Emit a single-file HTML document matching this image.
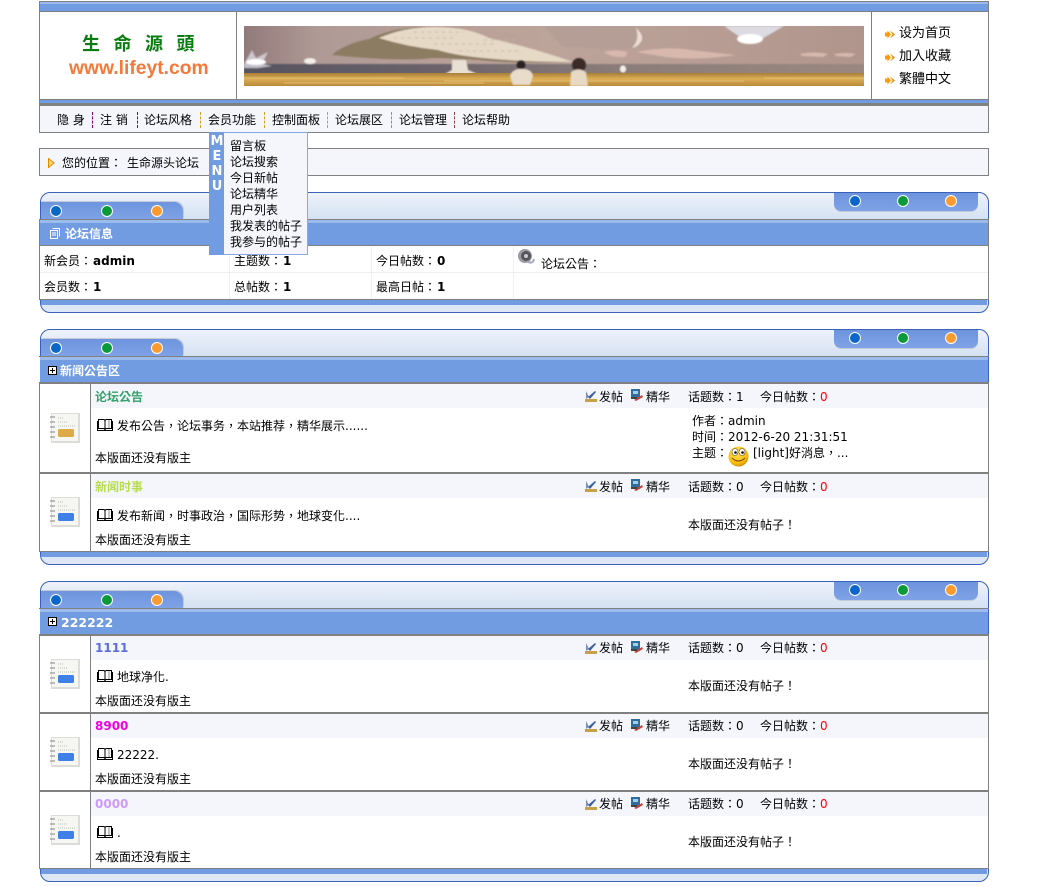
<!DOCTYPE html>
<html><head><meta charset="utf-8"><style>
html,body{margin:0;padding:0;background:#fff;width:1055px;height:887px;overflow:hidden}
body{position:relative;font:12px/16px "DejaVu Sans","Noto Sans CJK TC","WenQuanYi Zen Hei",sans-serif;color:#000}
div,span.a,svg.a{position:absolute}
.t{white-space:nowrap;height:16px;line-height:16px;padding-top:1px}
.g{background:#808080}
.bl{background:#719ce1}
.sec{left:40px;width:949px;box-sizing:border-box;border:1px solid #3b62b8;border-radius:10px;background:linear-gradient(#eef2fb,#d4e1f2) 0 0/100% 27px no-repeat #dde7f5}
.tl{left:0;top:9px;width:142px;height:17px;background:linear-gradient(#6d94de,#7fa2e6);border-radius:0 9px 0 0;box-shadow:1px -1px 0 #c4cad8}
.tr{left:793px;top:0;width:144px;height:18px;background:linear-gradient(#6d94de,#7fa2e6);border-radius:0 0 7px 7px;box-shadow:0 1px 0 #c4cad8}
.d{width:10px;height:10px;border-radius:50%;border:1px solid #fff}
.c1{background:#0a66c8}.c2{background:#0a9a3a}.c3{background:#fb9a2e}
.r{left:39px;width:950px;box-sizing:border-box;background:#fff;border-left:1px solid #808080;border-right:1px solid #808080}
.h{left:51px;right:0;top:0;height:24px;background:#f4f6fb}
.v{left:50px;top:0;bottom:0;width:1px;background:#808080}
.w{color:#fff;font-weight:bold}
b{font-weight:bold;margin-left:1px}
.s{color:#f00}
.l{width:1px;height:16px;top:112px;border-left:1px dashed}
</style></head><body>
<svg width="0" height="0" style="position:absolute"><defs>
<symbol id="nb" viewBox="0 0 30 30"><rect x="1" y="0" width="29" height="30" fill="#dcdcd8"/><rect x="2" y="1" width="26" height="27" fill="#f6f7f2"/><path d="M0 4h5M0 9h5M0 14h5M0 19h5M0 24h5" stroke="#999" stroke-width="1.2"/><path d="M8 5h6M8 9h10M8 13h17" stroke="#b9bdb5" stroke-dasharray="1 1"/><rect x="8" y="16" width="16" height="8" rx="1.5" fill="#3f80e8"/></symbol>
<symbol id="ny" viewBox="0 0 30 30"><rect x="1" y="0" width="29" height="30" fill="#dcdcd8"/><rect x="2" y="1" width="26" height="27" fill="#f6f7f2"/><path d="M0 4h5M0 9h5M0 14h5M0 19h5M0 24h5" stroke="#999" stroke-width="1.2"/><path d="M8 5h6M8 9h10M8 13h17" stroke="#b9bdb5" stroke-dasharray="1 1"/><rect x="8" y="16" width="16" height="8" rx="1.5" fill="#dcaa48"/></symbol>
<symbol id="bk" viewBox="0 0 16 13"><path d="M1.500 1.500h5.500l1 1 1-1h5.500v9h-5.500l-1 1-1-1h-5.500z" fill="#fff" stroke="#000"/><path d="M.5 3v9.500h15V3M8 2.500v9" fill="none" stroke="#000"/><path d="M12 2v8" stroke="#888"/></symbol>
<symbol id="p1" viewBox="0 0 12 12"><path d="M1 1v8l3-2z" fill="#7a8fb8"/><path d="M3 7l7-6 1 1-6 7z" fill="#3b5f9c"/><rect x="0" y="9" width="12" height="3" fill="#c9a04a"/></symbol>
<symbol id="p2" viewBox="0 0 12 12"><rect x="0" y="0" width="9" height="10" fill="#2f6d9e"/><rect x="2" y="2" width="5" height="3" fill="#9fd0e6"/><path d="M3 11l8-5 1 2-7 4z" fill="#c8443a"/><rect x="0" y="8" width="6" height="2" fill="#444"/></symbol>
<symbol id="ar" viewBox="0 0 10 9"><path d="M0 2.500h2.500V.5l3.500 4-3.500 4v-2H0z" fill="#ff9a00"/><path d="M5 .5L10 4.500 5 8.500l2.500-4z" fill="#f28a00"/></symbol>
<symbol id="plus" viewBox="0 0 9 9"><rect x=".5" y=".5" width="8" height="8" fill="#fff" stroke="#000"/><path d="M2 4.500h5M4.500 2v5" stroke="#000"/></symbol>
<radialGradient id="sm" cx=".4" cy=".3" r=".8"><stop offset="0" stop-color="#ffe95a"/><stop offset=".7" stop-color="#f8b808"/><stop offset="1" stop-color="#b87a08"/></radialGradient>
<linearGradient id="sky" x1="0" y1="0" x2="1" y2="0"><stop offset="0" stop-color="#917a7a"/><stop offset=".12" stop-color="#b09a96"/><stop offset=".5" stop-color="#bda49a"/><stop offset="1" stop-color="#b0958d"/></linearGradient>
<linearGradient id="hz" x1="0" y1="0" x2="1" y2="0"><stop offset="0" stop-color="#55535f"/><stop offset=".3" stop-color="#6a626a"/><stop offset=".6" stop-color="#8a7c78"/><stop offset="1" stop-color="#9a8880"/></linearGradient>
<linearGradient id="gr" x1="0" y1="0" x2="0" y2="1"><stop offset="0" stop-color="#a87e38"/><stop offset=".45" stop-color="#dcae55"/><stop offset="1" stop-color="#b98a3a"/></linearGradient>
<filter id="sf"><feGaussianBlur stdDeviation=".9"/></filter>
</defs></svg>

<!-- header -->
<div class="g" style="left:39px;top:1px;width:950px;height:132px"></div>
<div style="left:40px;top:2px;width:948px;height:130px;background:#fff"></div>
<div class="bl" style="left:40px;top:3px;width:948px;height:8px"></div>
<div style="left:40px;top:2px;width:948px;height:2px;background:#9bbbec"></div>
<div class="g" style="left:40px;top:11px;width:948px;height:1px"></div>
<div class="g" style="left:236px;top:12px;width:1px;height:87px"></div>
<div class="g" style="left:871px;top:12px;width:1px;height:87px"></div>
<div class="bl" style="left:40px;top:99px;width:948px;height:5px;border-top:1px solid #808080;box-sizing:border-box"></div>
<div class="g" style="left:40px;top:103px;width:948px;height:3px"></div>
<div style="left:40px;top:106px;width:948px;height:26px;background:#f4f6fb"></div>

<div class="t" style="left:82px;top:33px;height:24px;line-height:24px;padding:0;font-size:18px;font-weight:bold;color:#0a7d10;letter-spacing:13.500px">生命源頭</div>
<div class="t" style="left:69px;top:58px;height:22px;padding:0;font:bold 19.300px/22px 'Liberation Sans',sans-serif;color:#f5793a">www.lifeyt.com</div>

<svg class="a" style="left:244px;top:26px" width="620" height="60" viewBox="0 0 620 60">
<rect width="620" height="60" fill="url(#sky)"/>
<g filter="url(#sf)">
<path d="M390 0q14 8 10 16-4 6-12 6-30 2-70-2L300 0z" fill="#b59e96"/>
<path d="M392 2q10 9 4 15-3 4-8 5 8-8 4-20z" fill="#ecdcd2"/>
<path d="M360 26q12-3 24 0l-3 5q-14 1-21-5zM392 26q30-6 55-2l45 5q-40 6-70 2zM556 28q14-3 28 0l-5 3-21-1zM590 28q12-2 22 0l-6 3-14-1z" fill="#d8b8ac"/>
<rect y="38" width="620" height="10" fill="url(#hz)"/>
<path d="M88 29Q100 18 125 13q20-10 50-12 30 0 50 9 50 10 100 26-50 2-90-2-30-2-47-2-30 4-100-3z" fill="#8c7c62"/>
<path d="M135 12q25-11 55-11 35 0 55 11 45 10 84 24-50 0-90-4-30-3-45-8-30-3-59-12z" fill="#e6d9c6"/>
<path d="M150 12h60M170 6h50M190 18h60M215 25h60M240 14h30" stroke="#c8b8a2" stroke-dasharray="3 4"/>
<path d="M208 34l14 0 2 10 16 7h-44l12-7z" fill="#e8e0d2"/>
<path d="M0 38l8-14 4 8 12-6-6 12 10 2-14 2-14 0z" fill="#d5d2dc" opacity=".85"/><ellipse cx="12" cy="36" rx="10" ry="3" fill="#fff"/>
<ellipse cx="66" cy="35" rx="6" ry="3" fill="#f4efe9"/>
<path d="M480 0l20 14 16 0 24-14z" fill="#e4e6f0" opacity=".85"/><ellipse cx="506" cy="13" rx="13" ry="5" fill="#fff"/>
<ellipse cx="379" cy="43" rx="3" ry="3.500" fill="#f2efe8"/>
</g>
<rect y="47" width="620" height="13" fill="url(#gr)"/>
<path d="M0 52h160M200 55h300M520 52h100M40 57h200" stroke="#ecca84" opacity=".7"/>
<g filter="url(#sf)"><circle cx="277" cy="39" r="4.500" fill="#2c2220"/><path d="M266 50q2-6 8-7h7q7 1 8 7l-3 9h-17z" fill="#e9dccb"/>
<ellipse cx="335" cy="39" rx="7" ry="7" fill="#3a2a28"/><path d="M326 60l1-14q7-5 15 0l2 14z" fill="#e8d9c4"/></g>
</svg>

<svg class="a" style="left:885px;top:30px" width="10" height="9"><use href="#ar"/></svg>
<svg class="a" style="left:885px;top:53px" width="10" height="9"><use href="#ar"/></svg>
<svg class="a" style="left:885px;top:76px" width="10" height="9"><use href="#ar"/></svg>
<div class="t" style="left:899px;top:25px;font-size:13px">设为首页</div>
<div class="t" style="left:899px;top:48px;font-size:13px">加入收藏</div>
<div class="t" style="left:899px;top:71px;font-size:13px">繁體中文</div>

<!-- nav -->
<div class="t" style="left:57px;top:111px">隐 身</div>
<div class="l" style="left:92px;color:#800080"></div>
<div class="t" style="left:100px;top:111px">注 销</div>
<div class="l" style="left:137px;color:#800080"></div>
<div class="t" style="left:144px;top:111px">论坛风格</div>
<div class="l" style="left:200px;color:#c9a030"></div>
<div class="t" style="left:208px;top:111px">会员功能</div>
<div class="l" style="left:264px;color:#c9a030"></div>
<div class="t" style="left:272px;top:111px">控制面板</div>
<div class="l" style="left:327px;color:#c9a030"></div>
<div class="t" style="left:335px;top:111px">论坛展区</div>
<div class="l" style="left:391px;color:#c08040"></div>
<div class="t" style="left:399px;top:111px">论坛管理</div>
<div class="l" style="left:454px;color:#a04040"></div>
<div class="t" style="left:462px;top:111px">论坛帮助</div>

<!-- location -->
<div style="left:39px;top:148px;width:950px;height:28px;box-sizing:border-box;border:1px solid #808080;background:#f4f6fb"></div>
<svg class="a" style="left:48px;top:158px" width="7" height="10"><path d="M.5.500L6 5 .5 9.500z" fill="#ffd878" stroke="#e08a00"/></svg>
<div class="t" style="left:62px;top:154px">您的位置：</div>
<div class="t" style="left:127px;top:154px">生命源头论坛</div>

<!-- section 1 -->
<div class="sec" style="top:192px;height:121px"><div class="tl"></div><div class="tr"></div>
<div class="d c1" style="left:9px;top:12px"></div><div class="d c2" style="left:60px;top:12px"></div><div class="d c3" style="left:110px;top:12px"></div>
<div class="d c1" style="left:808px;top:2px"></div><div class="d c2" style="left:856px;top:2px"></div><div class="d c3" style="left:904px;top:2px"></div></div>
<div class="g" style="left:39px;top:219px;width:950px;height:81px"></div>
<div style="left:40px;top:220px;width:948px;height:3px;background:#9bbbec"></div>
<div class="bl" style="left:40px;top:223px;width:948px;height:22px"></div>
<div style="left:40px;top:246px;width:948px;height:53px;background:#fff"></div>
<div style="left:40px;top:272px;width:948px;height:1px;background:#f0f0f0"></div>
<div style="left:229px;top:246px;width:1px;height:53px;background:#f0f0f0"></div>
<div style="left:371px;top:246px;width:1px;height:53px;background:#f0f0f0"></div>
<div style="left:513px;top:246px;width:1px;height:53px;background:#f0f0f0"></div>
<div class="bl" style="left:41px;top:300px;width:946px;height:5px"></div>
<svg class="a" style="left:50px;top:228px" width="10" height="11"><path d="M2.500.500h7v8M.5 2.500h7v8h-7zM2 5h4M2 7h4" fill="none" stroke="#fff"/></svg>
<div class="t w" style="left:65px;top:225px">论坛信息</div>
<div class="t" style="left:44px;top:252px">新会员：<b>admin</b></div>
<div class="t" style="left:44px;top:278px">会员数：<b>1</b></div>
<div class="t" style="left:234px;top:252px">主题数：<b>1</b></div>
<div class="t" style="left:234px;top:278px">总帖数：<b>1</b></div>
<div class="t" style="left:376px;top:252px">今日帖数：<b>0</b></div>
<div class="t" style="left:376px;top:278px">最高日帖：<b>1</b></div>
<svg class="a" style="left:517px;top:248px" width="19" height="19"><path d="M11 14q5 2 6-3" fill="none" stroke="#a8a8c8" stroke-width="2"/><circle cx="8" cy="8" r="7" fill="#9a9aa0"/><circle cx="9" cy="8" r="5" fill="#55555c"/><circle cx="9" cy="8" r="2" fill="#c8c8d0"/></svg>
<div class="t" style="left:541px;top:255px">论坛公告：</div>

<!-- menu -->
<div style="left:209px;top:132px;width:99px;height:123px;box-sizing:border-box;border:1px solid #88a8e0;background:#f4f6fb"></div>
<div class="bl" style="left:209px;top:132px;width:15px;height:123px"></div>
<div class="t w" style="left:209px;top:133px;width:16px;text-align:center;font-size:13px">M</div>
<div class="t w" style="left:209px;top:148px;width:16px;text-align:center;font-size:13px">E</div>
<div class="t w" style="left:209px;top:163px;width:16px;text-align:center;font-size:13px">N</div>
<div class="t w" style="left:209px;top:178px;width:16px;text-align:center;font-size:13px">U</div>
<div class="t" style="left:230px;top:137px">留言板</div>
<div class="t" style="left:230px;top:153px">论坛搜索</div>
<div class="t" style="left:230px;top:169px">今日新帖</div>
<div class="t" style="left:230px;top:185px">论坛精华</div>
<div class="t" style="left:230px;top:201px">用户列表</div>
<div class="t" style="left:230px;top:217px">我发表的帖子</div>
<div class="t" style="left:230px;top:233px">我参与的帖子</div>

<!-- section 2 -->
<div class="sec" style="top:329px;height:236px"><div class="tl"></div><div class="tr"></div>
<div class="d c1" style="left:9px;top:12px"></div><div class="d c2" style="left:60px;top:12px"></div><div class="d c3" style="left:110px;top:12px"></div>
<div class="d c1" style="left:808px;top:2px"></div><div class="d c2" style="left:856px;top:2px"></div><div class="d c3" style="left:904px;top:2px"></div></div>
<div class="g" style="left:39px;top:356px;width:950px;height:1px"></div>
<div style="left:40px;top:357px;width:948px;height:3px;background:#9bbbec;"></div>
<div class="bl" style="left:40px;top:360px;width:948px;height:22px"></div>
<svg class="a" style="left:48px;top:366px" width="9" height="9"><use href="#plus"/></svg>
<div class="t w" style="left:60px;top:362px">新闻公告区</div>
<div class="g" style="left:39px;top:382px;width:950px;height:2px"></div>

<div class="r" style="top:384px;height:88px"><div class="h"></div><div class="v"></div>
<svg class="a" style="left:10px;top:29px" width="30" height="30"><use href="#ny"/></svg>
<div class="t" style="left:55px;top:4px;font-weight:bold;color:#35a06a">论坛公告</div>
<svg class="a" style="left:545px;top:6px" width="12" height="12"><use href="#p1"/></svg><div class="t" style="left:559px;top:4px">发帖</div>
<svg class="a" style="left:591px;top:5px" width="12" height="12"><use href="#p2"/></svg><div class="t" style="left:606px;top:4px">精华</div>
<div class="t" style="left:648px;top:4px">话题数：1</div><div class="t" style="left:720px;top:4px">今日帖数：<span class="s">0</span></div>
<svg class="a" style="left:57px;top:34px" width="16" height="13"><use href="#bk"/></svg>
<div class="t" style="left:77px;top:33px">发布公告，论坛事务，本站推荐，精华展示......</div>
<div class="t" style="left:55px;top:65px">本版面还没有版主</div>
<div class="t" style="left:652px;top:28px">作者：admin</div>
<div class="t" style="left:652px;top:44px">时间：2012-6-20 21:31:51</div>
<div class="t" style="left:652px;top:60px">主题：</div>
<svg class="a" style="left:688px;top:62px" width="21" height="21"><circle cx="10.500" cy="10.500" r="10" fill="url(#sm)"/><ellipse cx="7" cy="6" rx="3" ry="3.500" fill="#fff" stroke="#643" stroke-width=".6"/><ellipse cx="14" cy="6" rx="3" ry="3.500" fill="#fff" stroke="#643" stroke-width=".6"/><circle cx="7.500" cy="6.500" r="1.300"/><circle cx="14.500" cy="6.500" r="1.300"/><path d="M4 12q6.500 6 13 0" fill="none" stroke="#7a4a00"/></svg>
<div class="t" style="left:713px;top:60px">[light]好消息，...</div>
</div>
<div class="g" style="left:39px;top:472px;width:950px;height:2px"></div>
<div class="r" style="top:474px;height:77px"><div class="h"></div><div class="v"></div>
<svg class="a" style="left:10px;top:23px" width="30" height="30"><use href="#nb"/></svg>
<div class="t" style="left:55px;top:4px;font-weight:bold;color:#b8dc50">新闻时事</div>
<svg class="a" style="left:545px;top:6px" width="12" height="12"><use href="#p1"/></svg><div class="t" style="left:559px;top:4px">发帖</div>
<svg class="a" style="left:591px;top:5px" width="12" height="12"><use href="#p2"/></svg><div class="t" style="left:606px;top:4px">精华</div>
<div class="t" style="left:648px;top:4px">话题数：0</div><div class="t" style="left:720px;top:4px">今日帖数：<span class="s">0</span></div>
<svg class="a" style="left:57px;top:34px" width="16" height="13"><use href="#bk"/></svg>
<div class="t" style="left:77px;top:33px">发布新闻，时事政治，国际形势，地球变化....</div>
<div class="t" style="left:55px;top:57px">本版面还没有版主</div>
<div class="t" style="left:648px;top:42px">本版面还没有帖子！</div>
</div>
<div class="g" style="left:39px;top:551px;width:950px;height:1px"></div>
<div class="bl" style="left:41px;top:552px;width:946px;height:5px"></div>

<!-- section 3 -->
<div class="sec" style="top:581px;height:301px"><div class="tl"></div><div class="tr"></div>
<div class="d c1" style="left:9px;top:12px"></div><div class="d c2" style="left:60px;top:12px"></div><div class="d c3" style="left:110px;top:12px"></div>
<div class="d c1" style="left:808px;top:2px"></div><div class="d c2" style="left:856px;top:2px"></div><div class="d c3" style="left:904px;top:2px"></div></div>
<div class="g" style="left:39px;top:608px;width:950px;height:1px"></div>
<div style="left:40px;top:609px;width:948px;height:3px;background:#9bbbec"></div>
<div class="bl" style="left:40px;top:612px;width:948px;height:22px"></div>
<svg class="a" style="left:48px;top:617px" width="9" height="9"><use href="#plus"/></svg>
<div class="t w" style="left:61px;top:614px;font-size:12.500px">222222</div>
<div class="g" style="left:39px;top:634px;width:950px;height:2px"></div>

<div class="r" style="top:636px;height:76px"><div class="h"></div><div class="v"></div>
<svg class="a" style="left:10px;top:23px" width="30" height="30"><use href="#nb"/></svg>
<div class="t" style="left:55px;top:3px;font-weight:bold;color:#5a6ee0">1111</div>
<svg class="a" style="left:545px;top:6px" width="12" height="12"><use href="#p1"/></svg><div class="t" style="left:559px;top:3px">发帖</div>
<svg class="a" style="left:591px;top:5px" width="12" height="12"><use href="#p2"/></svg><div class="t" style="left:606px;top:3px">精华</div>
<div class="t" style="left:648px;top:3px">话题数：0</div><div class="t" style="left:720px;top:3px">今日帖数：<span class="s">0</span></div>
<svg class="a" style="left:57px;top:33px" width="16" height="13"><use href="#bk"/></svg>
<div class="t" style="left:77px;top:32px">地球净化.</div>
<div class="t" style="left:55px;top:56px">本版面还没有版主</div>
<div class="t" style="left:648px;top:41px">本版面还没有帖子！</div>
</div>
<div class="g" style="left:39px;top:712px;width:950px;height:2px"></div>
<div class="r" style="top:714px;height:76px"><div class="h"></div><div class="v"></div>
<svg class="a" style="left:10px;top:23px" width="30" height="30"><use href="#nb"/></svg>
<div class="t" style="left:55px;top:3px;font-weight:bold;color:#f000e0">8900</div>
<svg class="a" style="left:545px;top:6px" width="12" height="12"><use href="#p1"/></svg><div class="t" style="left:559px;top:3px">发帖</div>
<svg class="a" style="left:591px;top:5px" width="12" height="12"><use href="#p2"/></svg><div class="t" style="left:606px;top:3px">精华</div>
<div class="t" style="left:648px;top:3px">话题数：0</div><div class="t" style="left:720px;top:3px">今日帖数：<span class="s">0</span></div>
<svg class="a" style="left:57px;top:33px" width="16" height="13"><use href="#bk"/></svg>
<div class="t" style="left:77px;top:32px">22222.</div>
<div class="t" style="left:55px;top:56px">本版面还没有版主</div>
<div class="t" style="left:648px;top:41px">本版面还没有帖子！</div>
</div>
<div class="g" style="left:39px;top:790px;width:950px;height:2px"></div>
<div class="r" style="top:792px;height:76px"><div class="h"></div><div class="v"></div>
<svg class="a" style="left:10px;top:23px" width="30" height="30"><use href="#nb"/></svg>
<div class="t" style="left:55px;top:3px;font-weight:bold;color:#cc99ff">0000</div>
<svg class="a" style="left:545px;top:6px" width="12" height="12"><use href="#p1"/></svg><div class="t" style="left:559px;top:3px">发帖</div>
<svg class="a" style="left:591px;top:5px" width="12" height="12"><use href="#p2"/></svg><div class="t" style="left:606px;top:3px">精华</div>
<div class="t" style="left:648px;top:3px">话题数：0</div><div class="t" style="left:720px;top:3px">今日帖数：<span class="s">0</span></div>
<svg class="a" style="left:57px;top:33px" width="16" height="13"><use href="#bk"/></svg>
<div class="t" style="left:77px;top:32px">.</div>
<div class="t" style="left:55px;top:56px">本版面还没有版主</div>
<div class="t" style="left:648px;top:41px">本版面还没有帖子！</div>
</div>
<div class="g" style="left:39px;top:868px;width:950px;height:1px"></div>
<div class="bl" style="left:41px;top:869px;width:946px;height:5px"></div>
</body></html>
